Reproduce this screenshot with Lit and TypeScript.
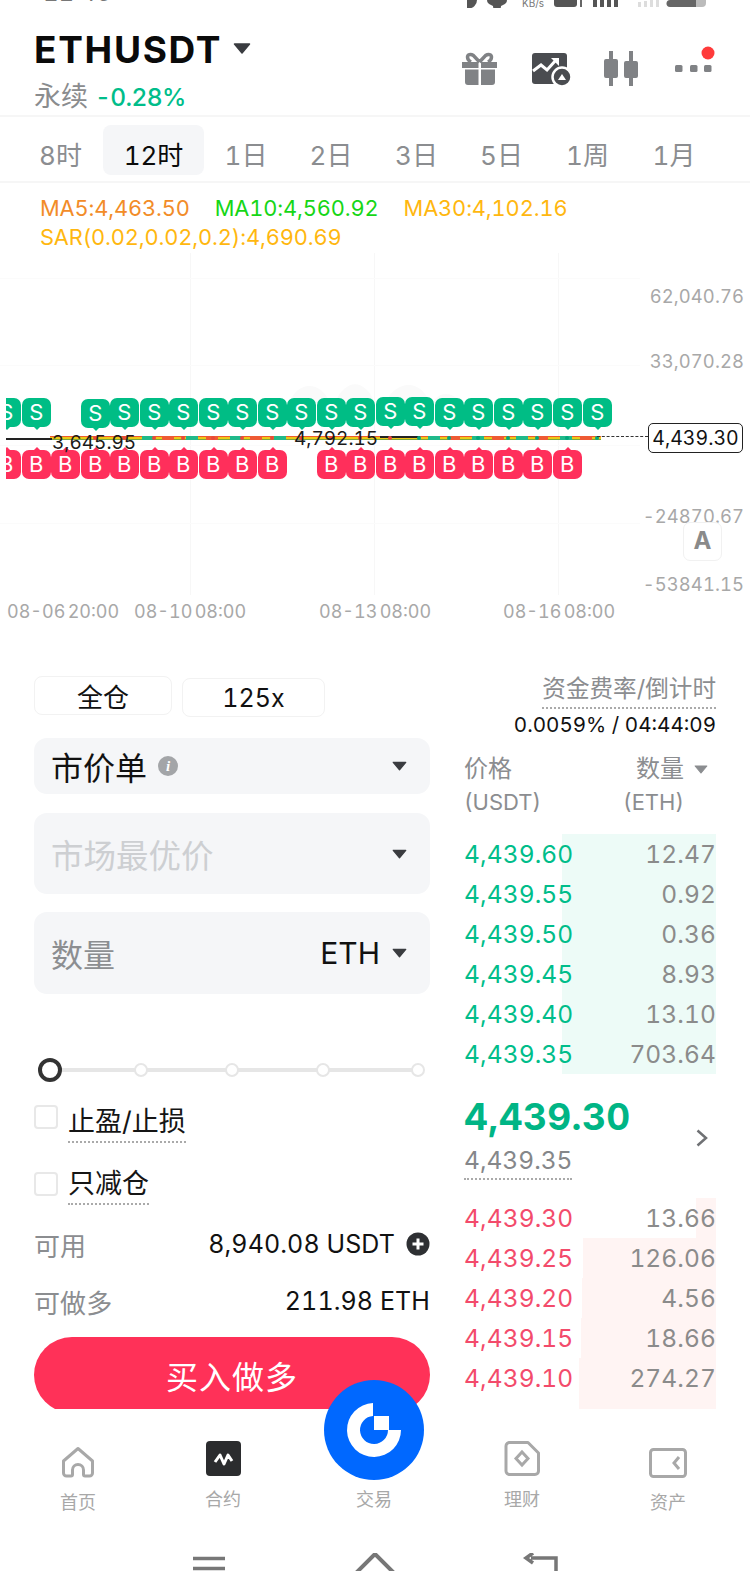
import { LitElement, html, css } from "lit";
import { customElement } from "lit/decorators.js";

const caret = (w = 18, h = 11, c = "#3a3c40") => html`<svg class="caret" width=${w} height=${h} viewBox="0 0 18 11"><path d="M1.5 1h15L9 10z" fill=${c} stroke=${c} stroke-width="1.5" stroke-linejoin="round"/></svg>`;

const tabs = ["8时", "12时", "1日", "2日", "3日", "5日", "1周", "1月"];
const sellX = [6, 36, 95, 124, 154, 183, 213, 242, 272, 301, 331, 360, 390, 419, 449, 478, 508, 537, 567, 597];
const sellDy = [0, 0, 1, 0, 0, 0, 0, 0, 0, 0, 0, 0, -1, -1, 0, 0, 0, 0, 0, 0];
const buyX = [6, 36, 65, 95, 124, 154, 183, 213, 242, 272, 331, 360, 390, 419, 449, 478, 508, 537, 567];
const axis = [
  ["62,040.76", 296],
  ["33,070.28", 361],
  ["-24870.67", 516],
  ["-53841.15", 584],
];
const dates = [
  ["08-06 20:00", 7],
  ["08-10 08:00", 134],
  ["08-13 08:00", 319],
  ["08-16 08:00", 503],
];
const asks = [
  ["4,439.60", "12.47", 154],
  ["4,439.55", "0.92", 154],
  ["4,439.50", "0.36", 154],
  ["4,439.45", "8.93", 154],
  ["4,439.40", "13.10", 154],
  ["4,439.35", "703.64", 154],
];
const bids = [
  ["4,439.30", "13.66", 20],
  ["4,439.25", "126.06", 133],
  ["4,439.20", "4.56", 134],
  ["4,439.15", "18.66", 135],
  ["4,439.10", "274.27", 137],
  ["4,439.05", "3.10", 137],
];

@customElement("app-root")
export class AppRoot extends LitElement {
  static styles = css`
    :host {
      display: block;
      width: 750px;
      height: 1571px;
      overflow: hidden;
      position: relative;
      background: #fff;
      color: #111;
      font-family: Inter, "Noto Sans CJK SC", sans-serif;
      font-variant-numeric: tabular-nums;
    }
    svg { display: block; }

    .status { height: 8px; overflow: hidden; display: flex; align-items: flex-end; padding: 0 42px 0 43px; }
    .time { font-size: 24px; line-height: 24px; color: #777; margin-bottom: 3px; }
    .sicons { margin-left: auto; display: flex; align-items: flex-end; color: #666; position: relative; }
    .kbs { position: absolute; left: 55px; bottom: 0; font-size: 10px; line-height: 10px; color: #777; }

    .head { height: 107px; padding: 0 34px 0 34px; display: flex; justify-content: space-between; box-sizing: border-box; }
    .title { display: flex; align-items: center; height: 56px; margin-top: 14px; gap: 11px; }
    .sym { font-size: 37px; line-height: 56px; font-weight: 700; letter-spacing: 1.7px; color: #0a0a0a; }
    .title .caret { margin-top: -4px; }
    .sub { display: flex; align-items: center; height: 36px; margin-top: 1px; gap: 7px; }
    .perp { font-size: 27px; color: #8a8c8e; line-height: 36px; }
    .chg { font-size: 24.5px; color: #00bd8a; line-height: 36px; font-weight: 500; letter-spacing: -0.6px; }
    .hicons { display: flex; align-items: flex-start; padding-top: 37px; }

    .tabs { height: 68px; box-sizing: border-box; border-top: 2px solid #f6f6f6; border-bottom: 2px solid #f6f6f6; padding: 8px 0 0 18px; display: grid; grid-template-columns: 85px 101px 84px 86px 85px 85px 87px 86px; }
    .tab { height: 50px; box-sizing: border-box; padding-top: 6px; border-radius: 8px; display: flex; align-items: center; justify-content: center; font-size: 26px; color: #8b8d90; }
    .tab.on { background: #f5f6f8; color: #0b0b0b; }

    .chart { height: 456px; position: relative; overflow: hidden; }
    .legend { padding: 11px 0 0 40px; font-size: 21.8px; line-height: 29px; letter-spacing: -0.12px; }
    .legend .l1 { display: flex; gap: 25px; }
    .o { color: #f28c28; }
    .g { color: #16d616; }
    .y { color: #ffb70f; }
    .vgrid { position: absolute; top: 70px; height: 342px; width: 1px; background: #f7f7f7; }
    .hgrid { position: absolute; left: 0; width: 640px; height: 1px; background: #fbfbfb; }
    .ghost { position: absolute; left: 285px; top: 195px; }
    .ax { position: absolute; right: 6px; font-size: 18.4px; line-height: 24px; letter-spacing: 0.1px; color: #a8a8a8; transform: translateY(-12px); }
    .dt { position: absolute; top: 416px; font-size: 18px; line-height: 26px; color: #a8a8a8; word-spacing: -2.5px; }
    .clip { position: absolute; left: 6px; top: 200px; width: 640px; height: 110px; overflow: hidden; }
    .mk { position: absolute; width: 28.5px; height: 28.5px; border-radius: 7px; color: #fff; font-size: 22px; line-height: 28.5px; text-align: center; }
    .mk.s { background: #00bd85; top: 15px; }
    .mk.b { background: #ff2f5b; top: 67px; }
    .mk::after { content: ""; position: absolute; left: 10.5px; border: 4px solid transparent; }
    .mk.s::after { top: 28px; border-top-color: #00bd85; }
    .mk.b::after { top: -7px; border-bottom-color: #ff2f5b; }
    .band { position: absolute; left: 44px; top: 53px; width: 551px; height: 4px;
      background: linear-gradient(#ef5a2e 0 1px, #ecc916 1px 3px, #7aa83a 3px 4px); }
    .band2 { position: absolute; top: 53px; height: 4px;
      background: repeating-linear-gradient(90deg, transparent 0 8px, #20b98a 8px 20px, transparent 20px 28px, #ee5a34 28px 40px, transparent 40px 44px); }
    .blk { position: absolute; height: 1.5px; background: #222; }
    .dots { position: absolute; width: 4px; height: 4px; border-radius: 50%; background: #00a87c; top: 53px; }
    .dots.r { background: #e8493a; }
    .pv { position: absolute; font-size: 19px; line-height: 22px; color: #1a1a1a; }
    .dash { position: absolute; left: 597px; top: 253px; width: 51px; border-top: 1.5px dashed #333; }
    .plabel { position: absolute; left: 648px; top: 240px; width: 95px; height: 30px; box-sizing: border-box; border: 1.5px solid #222; border-radius: 5px; background: #fff; font-size: 19.5px; line-height: 28px; text-align: center; color: #111; }
    .auto { position: absolute; left: 683px; top: 339px; width: 39px; height: 39px; box-sizing: border-box; border: 1.5px solid #f1f1f1; border-radius: 7px; background: #fff; color: #8a8a8a; font-size: 24px; font-weight: 700; line-height: 36px; text-align: center; }

    .trade { height: 770px; overflow: hidden; box-sizing: border-box; padding: 30px 34px 0; display: flex; gap: 34px; }
    .left { width: 396px; display: flex; flex-direction: column; flex: none; }
    .left > * { flex: none; }
    .right { width: 252px; flex: none; padding-top: 3px; }

    .modes { display: flex; gap: 10px; margin-top: 7px; height: 41px; align-items: flex-start; }
    .mode { height: 39px; box-sizing: border-box; border: 1.5px solid #f2f2f2; border-radius: 8px; display: flex; align-items: center; justify-content: center; font-size: 26px; color: #111; }
    .m1 { width: 138px; }
    .m2 { width: 143px; margin-top: 2px; font-size: 25px; }
    .sel { background: #f5f6f8; border-radius: 13px; display: flex; align-items: center; padding: 0 23px 0 17px; box-sizing: border-box; }
    .sel .caret { margin-left: auto; }
    .s1 { height: 56px; margin-top: 21px; font-size: 32px; color: #111; gap: 11px; }
    .s2 { height: 81px; margin-top: 19px; font-size: 32.5px; color: #cdcfd2; }
    .s3 { height: 82px; margin-top: 18px; font-size: 32px; color: #8c8e91; }
    .s3 .unit { margin-left: auto; font-size: 30px; color: #111; }
    .s3 .caret { margin-left: 12px; }
    .info { width: 20px; height: 20px; border-radius: 50%; background: #a3a5a8; color: #fff; font-size: 15px; line-height: 20px; font-style: italic; font-weight: 700; text-align: center; font-family: "Liberation Serif", serif; }

    .slider { margin-top: 64px; height: 24px; position: relative; display: flex; align-items: center; padding-left: 4px; }
    .track { position: absolute; left: 16px; right: 12px; top: 10px; height: 4px; background: #e6e6e6; }
    .knob { width: 24px; height: 24px; box-sizing: border-box; border: 4px solid #333; border-radius: 50%; background: #fff; position: relative; }
    .tick { width: 14px; height: 14px; box-sizing: border-box; border: 2px solid #e6e6e6; border-radius: 50%; background: #fff; position: relative; margin-left: 77px; }
    .tick.t1 { margin-left: 72px; }
    .tick.t4 { margin-left: 81px; }

    .chk { display: flex; gap: 10px; height: 41px; }
    .c1 { margin-top: 21px; }
    .c2 { margin-top: 21px; }
    .box { width: 24px; height: 24px; box-sizing: border-box; border: 2px solid #e8e8e8; border-radius: 4px; flex: none; }
    .c1 .box { margin-top: 2px; }
    .c2 .box { margin-top: 7px; }
    .dl { font-size: 27px; line-height: 38px; border-bottom: 2px dotted #aaa; display: inline-block; height: 38px; color: #151515; }

    .kv { display: flex; align-items: center; justify-content: space-between; height: 36px; font-size: 25px; letter-spacing: 0.1px; }
    .kv .k { color: #8b8d90; font-size: 26px; }
    .k1 { margin-top: 20px; }
    .k2 { margin-top: 21px; }
    .kv .v { display: flex; align-items: center; gap: 11px; color: #111; }
    .buy { margin-top: 18px; height: 76px; border-radius: 38px; background: #ff3158; color: #fff; font-size: 32px; display: flex; align-items: center; justify-content: center; letter-spacing: 1px; }

    .fund { text-align: right; }
    .fund .t { display: inline-block; font-size: 23.6px; line-height: 34px; height: 35px; color: #8b8d90; border-bottom: 2px dotted #aaa; }
    .fund .r { font-size: 20.6px; line-height: 28px; margin-top: 2px; color: #111; }
    .bh { display: flex; justify-content: space-between; margin-top: 13px; padding-right: 32px; color: #8b8d90; }
    .bh .a { font-size: 24px; line-height: 34px; }
    .bh .b { font-size: 22px; line-height: 32px; }
    .bh .rt { text-align: right; }
    .bh .a.q { display: flex; align-items: center; justify-content: flex-end; gap: 10px; margin-right: -24px; }
    .rows { margin-top: 16px; }
    .row { height: 40px; position: relative; display: flex; justify-content: space-between; align-items: center; font-size: 24.5px; letter-spacing: 0.1px; }
    .bar { position: absolute; right: 0; top: 0; bottom: 0; }
    .asks .bar { background: #edfbf7; }
    .bids .bar { background: #fff4f3; }
    .row span { position: relative; }
    .asks .p { color: #00bd8a; }
    .bids .p { color: #f34b6b; }
    .row .q { color: #8b8b8b; }
    .mid { display: flex; justify-content: space-between; align-items: center; margin-top: 21px; padding-right: 7px; }
    .last { font-size: 37px; line-height: 44px; font-weight: 700; color: #00b585; letter-spacing: 0.4px; }
    .mark { font-size: 24.5px; line-height: 34px; height: 35px; color: #85878a; border-bottom: 2px dotted #aaa; display: inline-block; margin-top: 4px; }
    .bids { margin-top: 18px; }

    .nav { height: 161px; position: relative; background: #fff; }
    .items { display: grid; grid-template-columns: 156px 134px 168px 128px 164px; height: 118px; }
    .item { display: flex; flex-direction: column; align-items: center; justify-content: flex-end; font-size: 18px; color: #a8a8a8; height: 103px; line-height: 24px; }
    .lb { margin-top: 12px; }
    .lb.low { margin-top: 13px; margin-bottom: -3px; }
    .fab { position: absolute; left: 324px; top: -29px; width: 100px; height: 100px; border-radius: 50%; background: #0068ff; display: flex; align-items: center; justify-content: center; }
    .sys { position: absolute; left: 0; right: 0; top: 144px; height: 18px; overflow: hidden; display: flex; }
  `;

  private marks() {
    return html`<div class="clip">
      <div class="band"></div>
      <div class="band2" style="left:128px;width:156px"></div>
      <div class="band2" style="left:414px;width:181px"></div>
      <div class="blk" style="left:0;top:55px;width:46px"></div>
      <div class="blk" style="left:374px;top:53px;width:40px"></div>
      ${sellX.map((x, i) => html`<div class="mk s" style="left:${x - 20}px;margin-top:${sellDy[i]}px">S</div>`)}
      ${buyX.map((x) => html`<div class="mk b" style="left:${x - 20}px">B</div>`)}
      ${sellX.slice(2).map((x, i) => html`<div class="dots ${i < 11 ? "r" : ""}" style="left:${x - 8}px"></div>`)}
      <div class="pv" style="left:46px;top:49px">3,645.95</div>
      <div class="pv" style="left:288px;top:45px">4,792.15</div>
    </div>`;
  }

  private statusIcons() {
    return html`<div class="sicons"><svg width="241" height="8" viewBox="0 0 241 8">
      <path d="M-4 0a8.500 8.500 0 0 0 17 0z" transform="translate(-3 0)" fill="#555"/>
      <path d="M20 0h20c0 3-2 4-4 5l-2 1a4 4 0 0 1-8 0l-2-1c-2-1-4-2-4-5z" fill="#555"/>
      <path d="M87 0h23v4a3 3 0 0 1-3 3H90a3 3 0 0 1-3-3z" fill="#555"/>
      <rect x="113" y="0" width="2" height="7" fill="#666"/>
      <path d="M126 0h4v7h-4zM133 0h4v7h-4zM140 0h4v7h-4zM147 0h4v7h-4z" fill="#555"/>
      <path d="M171 2h3v5h-3zM177 1h3v6h-3zM183 0h3v7h-3zM189 0h3v7h-3z" fill="#ddd"/>
      <path d="M203 0h36v3a4 4 0 0 1-4 4h-32z" fill="#bbb"/>
      <path d="M203 0h26v7h-26a3 3 0 0 1-0-7z" fill="#666"/>
    </svg><span class="kbs">KB/s</span></div>`;
  }

  render() {
    return html`
      <div class="status">
        <div class="time">11:45</div>
        ${this.statusIcons()}
      </div>
      <div class="head">
        <div>
          <div class="title"><span class="sym">ETHUSDT</span>${caret()}</div>
          <div class="sub"><span class="perp">永续</span><span class="chg">-0.28%</span></div>
        </div>
        <div class="hicons">
          <svg width="254" height="44" viewBox="462 45 254 44">
            <g fill="#808285">
              <path d="M462 62h16.500v6H462zM481 62h16v6h-16z"/>
              <path d="M465 69.500h13.500V85H468a3 3 0 0 1-3-3zM481 69.500h14V82a3 3 0 0 1-3 3h-11z"/>
              <path d="M609 51h4v8h3a2 2 0 0 1 2 2v15a2 2 0 0 1-2 2h-3v8h-4v-8h-3a2 2 0 0 1-2-2V61a2 2 0 0 1 2-2h3zM629 51h4v10h3a2 2 0 0 1 2 2v13a2 2 0 0 1-2 2h-3v8h-4v-8h-3a2 2 0 0 1-2-2V63a2 2 0 0 1 2-2h3z"/>
              <rect x="675" y="65" width="7.500" height="7" rx="1.500"/>
              <rect x="690" y="65" width="7.500" height="7" rx="1.500"/>
              <rect x="704" y="65" width="7.500" height="7" rx="1.500"/>
            </g>
            <path d="M479.500 62l-6-6.500c-3-2-6-1-6 1.500 0 2.500 1.500 4 3.500 5M479.500 62l6-6.500c3-2 6-1 6 1.500 0 2.500-1.500 4-3.500 5" fill="none" stroke="#808285" stroke-width="3.500"/>
            <rect x="532" y="53" width="35" height="31" rx="3" fill="#4a4c50"/>
            <path d="M533 71l8-6 6 5 9-10" fill="none" stroke="#fff" stroke-width="3"/>
            <path d="M551 58h8v8z" fill="#fff"/>
            <circle cx="562" cy="77" r="9.500" fill="#4a4c50" stroke="#fff" stroke-width="2.500"/>
            <path d="M558 80l4-6 4 6z" fill="#fff"/>
            <circle cx="708" cy="53" r="6.500" fill="#ff3b3b"/>
          </svg>
        </div>
      </div>
      <div class="tabs">
        ${tabs.map((t, i) => html`<div class="tab ${i === 1 ? "on" : ""}">${t}</div>`)}
      </div>
      <div class="chart">
        <div class="legend">
          <div class="l1"><span class="o">MA5:4,463.50</span><span class="g">MA10:4,560.92</span><span class="y">MA30:4,102.16</span></div>
          <div class="y">SAR(0.02,0.02,0.2):4,690.69</div>
        </div>
        ${[190, 374, 558].map((x) => html`<div class="vgrid" style="left:${x}px"></div>`)}
        ${[95, 182, 262, 340].map((y) => html`<div class="hgrid" style="top:${y}px"></div>`)}
        <svg class="ghost" width="180" height="25" viewBox="0 0 180 25"><path d="M5 25C10 5 35 0 45 25zM50 25C60 0 80 0 90 25zM100 25c10-22 35-26 45 0zM148 25c5-12 20-12 28 0z" fill="#fafafa"/></svg>
        ${axis.map(([t, y]) => html`<div class="ax" style="top:${(y as number) - 183}px">${t}</div>`)}
        ${dates.map(([t, x]) => html`<div class="dt" style="left:${x}px">${t}</div>`)}
        ${this.marks()}
        <div class="dash"></div>
        <div class="plabel">4,439.30</div>
        <div class="auto">A</div>
      </div>
      <div class="trade">
        <div class="left">
          <div class="modes"><div class="mode m1">全仓</div><div class="mode m2">125x</div></div>
          <div class="sel s1"><span>市价单</span><span class="info">i</span>${caret(15, 10)}</div>
          <div class="sel s2"><span>市场最优价</span>${caret(15, 10)}</div>
          <div class="sel s3"><span>数量</span><span class="unit">ETH</span>${caret(15, 10)}</div>
          <div class="slider">
            <div class="track"></div>
            <div class="knob"></div>
            <div class="tick t1"></div>
            <div class="tick"></div>
            <div class="tick"></div>
            <div class="tick t4"></div>
          </div>
          <div class="chk c1"><div class="box"></div><span class="dl">止盈/止损</span></div>
          <div class="chk c2"><div class="box"></div><span class="dl">只减仓</span></div>
          <div class="kv k1"><span class="k">可用</span><span class="v"><span>8,940.08 USDT</span>
            <svg width="24" height="24" viewBox="0 0 24 24"><circle cx="12" cy="12" r="11.500" fill="#2e3033"/><path d="M12 6.500v11M6.500 12h11" stroke="#fff" stroke-width="3"/></svg></span></div>
          <div class="kv k2"><span class="k">可做多</span><span class="v"><span>211.98 ETH</span></span></div>
          <div class="buy">买入做多</div>
        </div>
        <div class="right">
          <div class="fund"><span class="t">资金费率/倒计时</span><div class="r">0.0059% / 04:44:09</div></div>
          <div class="bh">
            <div><div class="a">价格</div><div class="b">(USDT)</div></div>
            <div class="rt"><div class="a q">数量 ${caret(14, 9, "#8b8d90")}</div><div class="b q">(ETH)</div></div>
          </div>
          <div class="rows asks">
            ${asks.map(([p, q, w]) => html`<div class="row"><div class="bar" style="width:${w}px"></div><span class="p">${p}</span><span class="q">${q}</span></div>`)}
          </div>
          <div class="mid">
            <div><div class="last">4,439.30</div><span class="mark">4,439.35</span></div>
            <svg width="14" height="18" viewBox="0 0 14 18"><path d="M2.500 1.500L11 9l-8.500 7.500" fill="none" stroke="#6f7174" stroke-width="2.500"/></svg>
          </div>
          <div class="rows bids">
            ${bids.map(([p, q, w]) => html`<div class="row"><div class="bar" style="width:${w}px"></div><span class="p">${p}</span><span class="q">${q}</span></div>`)}
          </div>
        </div>
      </div>
      <div class="nav">
        <div class="items">
          <div class="item"><svg width="34" height="32" viewBox="0 0 34 32"><path d="M17 2.500L31.500 15v12a3 3 0 0 1-3 3H24c-1 0-1.500-.5-1.500-1.500V24a5.500 5.500 0 0 0-11 0v4.500c0 1-.5 1.500-1.500 1.500H5.500a3 3 0 0 1-3-3V15z" fill="none" stroke="#a8a8a8" stroke-width="3" stroke-linejoin="round"/></svg><span class="lb low">首页</span></div>
          <div class="item"><svg width="35" height="35" viewBox="0 0 35 35"><rect width="35" height="35" rx="4" fill="#2b2c2e"/><path d="M9 21l5-7 4 9 4-9 4 6" fill="none" stroke="#fff" stroke-width="3" stroke-linejoin="round"/></svg><span class="lb">合约</span></div>
          <div class="item"><span>交易</span></div>
          <div class="item"><svg width="36" height="35" viewBox="0 0 36 35"><path d="M6 1.500h18L34.500 12v18a3.500 3.500 0 0 1-3.500 3.500H6A3.500 3.500 0 0 1 2 30V5a3.500 3.500 0 0 1 4-3.500z" fill="none" stroke="#a8a8a8" stroke-width="3" stroke-linejoin="round"/><path d="M18 11l6 6.500-6 6.500-6-6.500z" fill="none" stroke="#a8a8a8" stroke-width="3"/></svg><span class="lb">理财</span></div>
          <div class="item"><svg width="38" height="30" viewBox="0 0 38 30"><rect x="1.500" y="1.500" width="35" height="27" rx="3" fill="none" stroke="#a8a8a8" stroke-width="3"/><path d="M30 9l-5 6 5 6" fill="none" stroke="#a8a8a8" stroke-width="3"/></svg><span class="lb low">资产</span></div>
        </div>
        <div class="fab">
          <svg width="56" height="56" viewBox="0 0 56 56">
            <path d="M27 1a27 27 0 1 0 28 27H42a14 14 0 1 1-15-14z" fill="#fff"/>
            <rect x="28" y="14" width="15" height="14" fill="#fff"/>
          </svg>
        </div>
        <div class="sys">
          <svg width="750" height="18" viewBox="0 0 750 18">
            <path d="M193 5.500h32M193 15.500h32" stroke="#777" stroke-width="3.500"/>
            <path d="M356 20l19-19 19 19" fill="none" stroke="#777" stroke-width="4"/>
            <path d="M531 5h25v14M533 0l-7 5 7 5" fill="none" stroke="#777" stroke-width="3.500"/>
          </svg>
        </div>
      </div>
    `;
  }
}
